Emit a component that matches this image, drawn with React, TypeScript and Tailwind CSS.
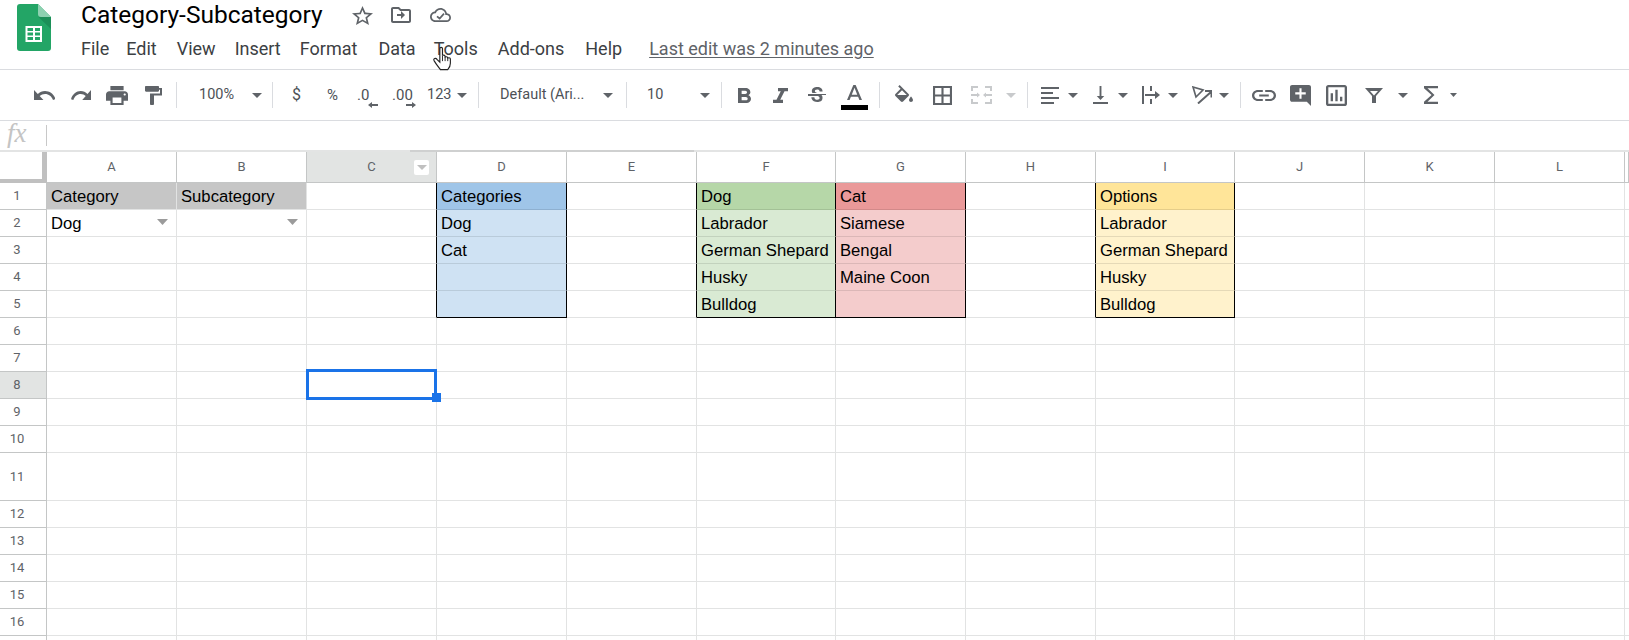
import React from "react";

const G = "#5f6368";

function Icon({ box, w, h, d, color = G, rule, cls = "" }: { box: string; w: number; h: number; d: string; color?: string; rule?: "evenodd"; cls?: string }) {
  return (
    <svg viewBox={box} width={w} height={h} preserveAspectRatio="none" className={"block shrink-0 " + cls}>
      <path d={d} fill={color} fillRule={rule} />
    </svg>
  );
}

function Arrow({ cls = "", color = G, w = 10, h = 5 }: { cls?: string; color?: string; w?: number; h?: number }) {
  return (
    <svg viewBox="0 0 10 5" width={w} height={h} preserveAspectRatio="none" className={"block shrink-0 " + cls}>
      <path d="M0 0H10L5 5Z" fill={color} />
    </svg>
  );
}

function Sep({ cls }: { cls: string }) {
  return <div className={"h-[26px] w-px shrink-0 bg-[#dadce0] " + cls} />;
}

function Logo() {
  return (
    <svg viewBox="0 0 34 47" width={34} height={47} className="block shrink-0">
      <path d="M3 0H21L34 13V44a3 3 0 0 1-3 3H3a3 3 0 0 1-3-3V3a3 3 0 0 1 3-3Z" fill="#23a566" />
      <path d="M21.5 13L34 25V13Z" fill="#1c8f58" />
      <path d="M21 0L34 13H24a3 3 0 0 1-3-3Z" fill="#8ed1b1" />
      <path
        d="M8.5 22H25V38H8.5Z M10.5 24V27H16V24Z M18 24V27H23V24Z M10.5 28.5V31.5H16V28.5Z M18 28.5V31.5H23V28.5Z M10.5 33V36H16V33Z M18 33V36H23V33Z"
        fill="#fff"
        fillRule="evenodd"
      />
    </svg>
  );
}

function Hand() {
  return (
    <svg viewBox="0 0 19 23" width={20} height={25} className="absolute left-[433px] top-[46px] z-20">
      <path
        d="M6.5 2C6.5.5 9 .5 9 2V9C9 8 11.5 8 11.5 9.5V10.5C11.5 9.5 14 9.5 14 11V11.5C14 10.5 16.5 10.5 16.5 12V16C16.5 19 15 21 14 22H7C5.5 20 3 17 1 13.5C0 11.5 2.5 10.5 4 12.5L6.5 15Z"
        fill="#fff"
        stroke="#222"
        strokeWidth="1.1"
      />
      <path d="M9 9V14M11.5 10V14M14 11V14" stroke="#222" strokeWidth="0.9" fill="none" />
    </svg>
  );
}

const tb = "font-['Roboto',sans-serif] text-[#4d5156] shrink-0 leading-none";

function Toolbar() {
  return (
    <div className="flex h-[50px] items-center border-b border-[#dadce0] box-content">
      <Icon cls="ml-[34px]" box="2 7 20 9" w={21} h={10} d="M12.5 8c-2.65 0-5.05.99-6.9 2.6L2 7v9h9l-3.62-3.62c1.39-1.16 3.16-1.88 5.12-1.88 3.54 0 6.55 2.31 7.6 5.5l2.37-.78C21.08 11.03 17.15 8 12.5 8z" />
      <Icon cls="ml-[16px]" box="1.5 7 20.5 9" w={20} h={10} d="M18.4 10.6C16.55 8.99 14.15 8 11.5 8c-4.65 0-8.58 3.03-9.96 7.22L3.9 16c1.05-3.19 4.05-5.5 7.6-5.5 1.95 0 3.73.72 5.12 1.88L13 16h9V7l-3.6 3.6z" />
      <Icon cls="ml-[15px]" box="2 3 20 18" w={22} h={19} d="M19 8H5c-1.66 0-3 1.34-3 3v6h4v4h12v-4h4v-6c0-1.66-1.34-3-3-3zm-3 11H8v-5h8v5zm3-7c-.55 0-1-.45-1-1s.45-1 1-1 1 .45 1 1-.45 1-1 1zm-1-9H6v4h12V3z" />
      <Icon cls="ml-[17px]" box="4 2 17 20" w={17} h={19} d="M18 4V3c0-.55-.45-1-1-1H5c-.55 0-1 .45-1 1v4c0 .55.45 1 1 1h12c.55 0 1-.45 1-1V6h1v4H9v11c0 .55.45 1 1 1h2c.55 0 1-.45 1-1v-9h8V4h-3z" />
      <Sep cls="ml-[14px]" />
      <span className={tb + " ml-[22px] w-[35px] text-[14.5px]"}>100%</span>
      <Arrow cls="ml-[18px]" />
      <Sep cls="ml-[10px]" />
      <span className={tb + " ml-[19px] w-[8px] text-[16px]"}>$</span>
      <span className={tb + " ml-[27px] w-[11px] text-[15px]"}>%</span>
      <span className={tb + " relative ml-[19px] w-[21px] text-[15px]"}>
        .0
        <svg viewBox="0 0 10 6" width={10} height={6} className="absolute left-[11px] top-[14px]"><path d="M0 3L4 0V2H10V4H4V6Z" fill={G} /></svg>
      </span>
      <span className={tb + " relative ml-[14px] w-[24px] text-[15px]"}>
        .00
        <svg viewBox="0 0 10 6" width={10} height={6} className="absolute left-[14px] top-[14px]"><path d="M10 3L6 0V2H0V4H6V6Z" fill={G} /></svg>
      </span>
      <span className={tb + " ml-[11px] w-[25px] text-[14.5px]"}>123</span>
      <Arrow cls="ml-[5px]" />
      <Sep cls="ml-[11px]" />
      <span className={tb + " ml-[21px] w-[88px] whitespace-nowrap text-[14.5px]"}>Default (Ari...</span>
      <Arrow cls="ml-[15px]" />
      <Sep cls="ml-[13px]" />
      <span className={tb + " ml-[20px] w-[16px] text-[14.5px]"}>10</span>
      <Arrow cls="ml-[37px]" />
      <Sep cls="ml-[11px]" />
      <Icon cls="ml-[16px]" box="7 4 10.75 14" w={13} h={15} d="M15.6 10.79c.97-.67 1.65-1.77 1.65-2.79 0-2.26-1.75-4-4-4H7v14h7.04c2.09 0 3.71-1.7 3.71-3.79 0-1.52-.86-2.82-2.15-3.42zM10 6.5h3c.83 0 1.5.67 1.5 1.5s-.67 1.5-1.5 1.5h-3v-3zm3.5 9H10v-3h3.5c.83 0 1.5.67 1.5 1.5s-.67 1.5-1.5 1.5z" />
      <Icon cls="ml-[22px]" box="6 4 12 14" w={15} h={15} d="M10 4v3h2.21l-3.42 8H6v3h8v-3h-2.21l3.42-8H18V4z" />
      <Icon cls="ml-[20px]" box="3 3 18 16" w={18} h={16} d="M6.85 7.08C6.85 4.37 9.45 3 12.24 3c1.64 0 3 .49 3.9 1.28.77.65 1.46 1.73 1.46 3.24h-3.01c0-.31-.05-.59-.15-.85-.29-.86-1.2-1.28-2.25-1.28-1.86 0-2.34 1.02-2.34 1.7 0 .48.25.88.74 1.21.38.25.77.48 1.41.7H7.39c-.21-.34-.54-.89-.54-1.92zM21 12v-2H3v2h9.62c1.15.45 1.96.75 1.96 1.97 0 1-.81 1.67-2.28 1.67-1.54 0-2.93-.54-2.93-2.51H6.4c0 .55.08 1.13.24 1.58.81 2.29 3.22 3.3 5.67 3.3 2.35 0 5.2-.92 5.2-4.05 0-.66-.02-1.94-1.05-2.96H21z" />
      <div className="ml-[15px] mt-[5px] flex w-[27px] shrink-0 flex-col items-center">
        <Icon box="5.5 3 13 14" w={15} h={15} d="M11 3L5.5 17h2.25l1.12-3h6.25l1.12 3h2.25L13 3h-2zm-1.38 9L12 5.67 14.38 12H9.62z" />
        <div className="mt-[5px] h-[5px] w-[27px] bg-black" />
      </div>
      <Sep cls="ml-[11px]" />
      <Icon cls="ml-[15px] -mt-[3px]" box="3 0 18 17" w={18} h={17} d="M16.56 8.94L7.62 0 6.21 1.41l2.38 2.38-5.15 5.15c-.59.59-.59 1.54 0 2.12l5.5 5.5c.29.29.68.44 1.06.44s.77-.15 1.06-.44l5.5-5.5c.59-.58.59-1.53 0-2.12zM5.21 10L10 5.21 14.79 10H5.21zM19 11.5s-2 2.17-2 3.5c0 1.1.9 2 2 2s2-.9 2-2c0-1.33-2-3.5-2-3.5z" />
      <Icon cls="ml-[20px]" box="3 3 18 18" w={19} h={19} d="M3 3v18h18V3H3zm8 16H5v-6h6v6zm0-8H5V5h6v6zm8 8h-6v-6h6v6zm0-8h-6V5h6v6z" />
      <svg viewBox="0 0 21 18" width={21} height={18} className="ml-[19px] block shrink-0">
        <path d="M0 0H7V2H2V5H0ZM14 0H21V5H19V2H14ZM0 13H2V16H7V18H0ZM19 13H21V18H14V16H19ZM0 8H6V6.5L9 9 6 11.5V10H0ZM21 8H15V6.5L12 9 15 11.5V10H21Z" fill="#c8cacc" />
      </svg>
      <Arrow cls="ml-[14px]" color="#c8cacc" />
      <Sep cls="ml-[11px]" />
      <svg viewBox="0 0 18 17" width={18} height={17} className="ml-[13px] block shrink-0">
        <path d="M0 0H18V2H0ZM0 5H12V7H0ZM0 10H18V12H0ZM0 15H13V17H0Z" fill={G} />
      </svg>
      <Arrow cls="ml-[9px]" />
      <Icon cls="ml-[15px]" box="4 3 16 18" w={15} h={18} d="M16 13h-3V3h-2v10H8l4 4 4-4zM4 19v2h16v-2H4z" />
      <Arrow cls="ml-[10px]" />
      <svg viewBox="0 0 18 18" width={18} height={18} className="ml-[14px] block shrink-0">
        <path d="M0 0H2V18H0ZM8 0H10V5H8ZM8 13H10V18H8ZM3 8H13V5L18 9 13 13V10H3Z" fill={G} />
      </svg>
      <Arrow cls="ml-[8px]" />
      <svg viewBox="0 0 20 18" width={20} height={18} className="ml-[14px] block shrink-0">
        <path d="M1 1L11 4 4 11Z" fill="none" stroke={G} strokeWidth="1.7" />
        <path d="M6 17.5L19 6M13 5H19.5V11.5" fill="none" stroke={G} strokeWidth="2" />
      </svg>
      <Arrow cls="ml-[7px]" />
      <Sep cls="ml-[11px]" />
      <Icon cls="ml-[11px]" box="2 7 20 10" w={24} h={11} d="M3.9 12c0-1.71 1.39-3.1 3.1-3.1h4V7H7c-2.76 0-5 2.24-5 5s2.24 5 5 5h4v-1.9H7c-1.71 0-3.1-1.39-3.1-3.1zM8 13h8v-2H8v2zm9-6h-4v1.9h4c1.71 0 3.1 1.39 3.1 3.1s-1.39 3.1-3.1 3.1h-4V17h4c2.76 0 5-2.24 5-5s-2.24-5-5-5z" />
      <Icon cls="ml-[14px]" box="2 2 20 20" w={21} h={21} d="M21.99 4c0-1.1-.89-2-1.99-2H4c-1.1 0-2 .9-2 2v12c0 1.1.9 2 2 2h14l4 4-.01-18zM17 11h-4v4h-2v-4H7V9h4V5h2v4h4v2z" />
      <Icon cls="ml-[15px]" box="3 3 18 18" w={21} h={21} d="M9 17H7v-7h2v7zm4 0h-2V7h2v10zm4 0h-2v-4h2v4zm2 2H5V5h14v14zm0-16H5c-1.1 0-2 .9-2 2v14c0 1.1.9 2 2 2h14c1.1 0 2-.9 2-2V5c0-1.1-.9-2-2-2z" />
      <Icon cls="ml-[18px]" box="0 0 18 15" w={18} h={15} rule="evenodd" d="M0 0H18L11 8V15H7V8ZM5 3H13L9 7.5Z" />
      <Arrow cls="ml-[15px]" />
      <Icon cls="ml-[16px]" box="6 4 12 16" w={14} h={18} d="M18 4H6v2l6.5 6L6 18v2h12v-2H9l6-6-6-6h9z" />
      <Arrow cls="ml-[12px]" w={7} h={4} />
    </div>
  );
}

const headers = ["A", "B", "C", "D", "E", "F", "G", "H", "I", "J", "K", "L", ""];
const rowNums = [1, 2, 3, 4, 5, 6, 7, 8, 9, 10, 11, 12, 13, 14, 15, 16, 17];

type C = { t?: string; bg?: string; ar?: boolean };
const data: Record<string, C[]> = {
  A: [{ t: "Category", bg: "bg-[#c6c6c6]" }, { t: "Dog", ar: true }],
  B: [{ t: "Subcategory", bg: "bg-[#c6c6c6]" }, { ar: true }],
  D: [
    { t: "Categories", bg: "bg-[#9fc5e8]" },
    { t: "Dog", bg: "bg-[#cfe2f3]" },
    { t: "Cat", bg: "bg-[#cfe2f3]" },
    { bg: "bg-[#cfe2f3]" },
    { bg: "bg-[#cfe2f3]" },
  ],
  F: [
    { t: "Dog", bg: "bg-[#b6d7a8]" },
    { t: "Labrador", bg: "bg-[#d9ead3]" },
    { t: "German Shepard", bg: "bg-[#d9ead3]" },
    { t: "Husky", bg: "bg-[#d9ead3]" },
    { t: "Bulldog", bg: "bg-[#d9ead3]" },
  ],
  G: [
    { t: "Cat", bg: "bg-[#ea9999]" },
    { t: "Siamese", bg: "bg-[#f4cccc]" },
    { t: "Bengal", bg: "bg-[#f4cccc]" },
    { t: "Maine Coon", bg: "bg-[#f4cccc]" },
    { bg: "bg-[#f4cccc]" },
  ],
  I: [
    { t: "Options", bg: "bg-[#ffe599]" },
    { t: "Labrador", bg: "bg-[#fff2cc]" },
    { t: "German Shepard", bg: "bg-[#fff2cc]" },
    { t: "Husky", bg: "bg-[#fff2cc]" },
    { t: "Bulldog", bg: "bg-[#fff2cc]" },
  ],
};

const boxed = ["D", "F", "G", "I"];
const blackRightOnly = ["C", "E", "H"];

function Cell({ col, r }: { col: string; r: number }) {
  const c = data[col]?.[r - 1];
  const inBox = r <= 5;
  const rightBlack = inBox && (boxed.includes(col) || blackRightOnly.includes(col));
  const bottomBlack = r === 5 && boxed.includes(col);
  const colored = !!c?.bg && col !== "A" && col !== "B";
  const right = rightBlack ? "border-r-black" : colored ? "border-r-black/10" : "border-r-[#e2e3e3]";
  const bottom = bottomBlack ? "border-b-black" : colored ? "border-b-black/10" : "border-b-[#e2e3e3]";
  return (
    <div className={"relative flex items-center overflow-hidden whitespace-nowrap border-r border-b pl-[4px] pt-[2px] font-['Liberation_Sans',sans-serif] text-[16.67px] leading-none text-black " + right + " " + bottom + " " + (c?.bg ?? "bg-white")}>
      {c?.t}
      {c?.ar && <Arrow cls="absolute right-[8px] top-[9px]" color="#9b9b9b" w={11} h={6} />}
    </div>
  );
}

function Sheet() {
  return (
    <div className="relative">
      <div className="flex h-[2px]">
        <div className="w-[410px] bg-[#e3e4e4]" />
        <div className="w-[284px] bg-[#cfd0d0]" />
        <div className="flex-1 bg-[#e3e4e4]" />
      </div>
      <div className="grid grid-cols-[47px_130px_130px_130px_130px_130px_139px_130px_130px_139px_130px_130px_130px_4px] grid-rows-[31px_repeat(10,27px)_48px_repeat(6,27px)]">
        <div className="border-r-[5px] border-b-[4px] border-[#c0c0c0] bg-white" />
        {headers.map((h) => (
          <div
            key={"h" + h}
            className={
              "relative flex items-center justify-center border-b border-r border-[#c4c6c6] font-['Roboto',sans-serif] text-[13px] text-[#5f6368] " +
              (h === "C" ? "bg-[#e2e4e3]" : "bg-white")
            }
          >
            {h}
            {h === "C" && (
              <span className="absolute right-[7px] top-[8px] flex h-[15px] w-[15px] items-center justify-center rounded-[2px] bg-white">
                <Arrow color="#c0c0c0" />
              </span>
            )}
          </div>
        ))}
        {rowNums.map((r) => (
          <React.Fragment key={r}>
            <div
              className={
                "flex items-center border-r border-b border-[#c4c6c6] font-['Roboto',sans-serif] text-[13px] text-[#5f6368] " +
                (r === 8 ? "bg-[#e2e4e3]" : "bg-white")
              }
            >
              {r < 17 && <span className="w-[34px] text-center">{r}</span>}
            </div>
            {headers.map((h) => (
              <Cell key={h + r} col={h} r={r} />
            ))}
          </React.Fragment>
        ))}
      </div>
      <div className="absolute left-[306px] top-[219px] h-[31px] w-[131px] border-[3px] border-[#1a73e8]" />
      <div className="absolute left-[432px] top-[243px] h-[9px] w-[9px] bg-[#1a73e8]" />
    </div>
  );
}

export default function App() {
  const menu: [string, string][] = [
    ["File", "ml-0"],
    ["Edit", "ml-[17px]"],
    ["View", "ml-[20px]"],
    ["Insert", "ml-[19px]"],
    ["Format", "ml-[19px]"],
    ["Data", "ml-[21px]"],
    ["Tools", "ml-[18px]"],
    ["Add-ons", "ml-[20px]"],
    ["Help", "ml-[21px]"],
  ];
  return (
    <div className="relative h-[640px] w-[1629px] overflow-hidden bg-white font-['Roboto',sans-serif]">
      <Hand />
      <div className="flex h-[69px] border-b border-[#dadce0] box-content">
        <div className="ml-[17px] mt-[4px]">
          <Logo />
        </div>
        <div className="ml-[30px]">
          <div className="flex h-[30px] items-center">
            <span className="w-[243px] whitespace-nowrap text-[24.5px] leading-none text-black">Category-Subcategory</span>
            <Icon cls="ml-[28px]" box="2 2 20 19" w={21} h={19} d="M22 9.24l-7.19-.62L12 2 9.19 8.63 2 9.24l5.46 4.73L5.82 21 12 17.27 18.18 21l-1.63-7.03L22 9.24zM12 15.4l-3.76 2.27 1-4.28-3.32-2.88 4.38-.38L12 6.1l1.71 4.04 4.38.38-3.32 2.88 1 4.28L12 15.4z" />
            <Icon cls="ml-[18px]" box="2 4 20 16" w={20} h={16} d="M20 6h-8l-2-2H4c-1.1 0-2 .9-2 2v12c0 1.1.9 2 2 2h16c1.1 0 2-.9 2-2V8c0-1.1-.9-2-2-2zm0 12H4V6h5.17l2 2H20v10zm-8-2v-3H8v-2h4V8l4 4z" />
            <svg viewBox="0 4 24 16" width={21} height={14} className="ml-[19px] block shrink-0">
              <path d="M19.35 10.04C18.67 6.59 15.64 4 12 4 9.11 4 6.6 5.64 5.35 8.04 2.34 8.36 0 10.91 0 14c0 3.31 2.69 6 6 6h13c2.76 0 5-2.24 5-5 0-2.64-2.05-4.78-4.65-4.96zM19 18H6c-2.21 0-4-1.79-4-4s1.79-4 4-4h.71C7.37 7.69 9.48 6 12 6c3.04 0 5.5 2.46 5.5 5.5v.5H19c1.66 0 3 1.34 3 3s-1.34 3-3 3z" fill={G} />
              <path d="M8 13.5L11 16 16 10.5" fill="none" stroke={G} strokeWidth="2" />
            </svg>
          </div>
          <div className="mt-[8px] flex h-[22px] items-center whitespace-nowrap text-[18px] leading-none text-[#3c4043]">
            {menu.map(([m, c]) => (
              <span key={m} className={c}>{m}</span>
            ))}
            <span className="ml-[27px] text-[#5f6368] underline underline-offset-2">Last edit was 2 minutes ago</span>
          </div>
        </div>
      </div>
      <Toolbar />
      <div className="flex h-[29px] items-center">
        <span className="ml-[7px] -mt-[5px] w-[39px] font-['Liberation_Serif',serif] text-[27px] italic leading-none text-[#c4c4c4]">fx</span>
        <div className="h-[21px] w-px bg-[#c8c8c8]" />
      </div>
      <Sheet />
    </div>
  );
}
